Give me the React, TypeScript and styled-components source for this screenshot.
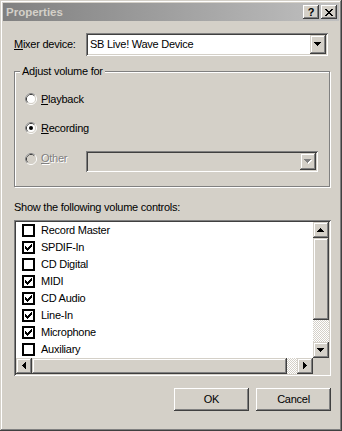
import React from "react";
import styled, { createGlobalStyle, css } from "styled-components";

const GlobalStyle = createGlobalStyle`
  html, body {
    margin: 0;
    padding: 0;
    background: #d4d0c8;
  }
  body {
    font-family: "Liberation Sans", Arial, sans-serif;
    font-size: 11px;
    line-height: 13px;
    letter-spacing: -0.25px;
    color: #000;
  }
  * {
    box-sizing: border-box;
  }
`;

// classic 3d edges
const pushBevel = css`
  background: #d4d0c8;
  box-shadow: inset -1px -1px #404040, inset 1px 1px #fff, inset -2px -2px #808080,
    inset 2px 2px #d4d0c8;
`;

const frameBevel = css`
  background: #d4d0c8;
  box-shadow: inset -1px -1px #404040, inset 1px 1px #d4d0c8, inset -2px -2px #808080,
    inset 2px 2px #fff;
`;

const sunken = css`
  box-shadow: inset 1px 1px #808080, inset -1px -1px #fff, inset 2px 2px #404040,
    inset -2px -2px #d4d0c8;
`;

const dither = css`
  background-color: #fff;
  background-image: repeating-conic-gradient(#d4d0c8 0 25%, #fff 0 50%);
  background-size: 2px 2px;
`;

const Window = styled.div`
  width: 342px;
  height: 431px;
  padding: 3px;
  display: flex;
  flex-direction: column;
  ${frameBevel};
`;

const TitleBar = styled.div`
  height: 18px;
  display: flex;
  align-items: center;
  padding: 0 2px 0 3px;
  background: linear-gradient(to right, #808080, #c0c0c0);
`;

const TitleText = styled.span`
  flex: 1;
  font-weight: bold;
  font-size: 11.5px;
  letter-spacing: 0;
  color: #d4d0c8;
`;

const CaptionButtons = styled.div`
  display: flex;
  gap: 2px;
`;

const CaptionButton = styled.div`
  width: 16px;
  height: 14px;
  display: flex;
  align-items: center;
  justify-content: center;
  font-weight: bold;
  font-size: 11px;
  line-height: 1;
  ${pushBevel};
`;

const Body = styled.div`
  display: flex;
  flex-direction: column;
  padding: 12px 8px 0 11px;
`;

const MixerRow = styled.div`
  display: flex;
  align-items: center;
`;

const FieldLabel = styled.span`
  width: 72px;
  white-space: nowrap;
`;

const ComboBox = styled.div<{ $width: number; $height: number; $disabled?: boolean }>`
  width: ${(p) => p.$width}px;
  height: ${(p) => p.$height}px;
  padding: 2px;
  display: flex;
  align-items: stretch;
  background: ${(p) => (p.$disabled ? "#d4d0c8" : "#fff")};
  ${sunken};
`;

const ComboText = styled.span`
  flex: 1;
  padding-left: 2px;
  display: flex;
  align-items: center;
  white-space: nowrap;
`;

const DropButton = styled.div`
  width: 16px;
  display: flex;
  align-items: center;
  justify-content: center;
  ${frameBevel};
`;

const GroupBox = styled.div`
  position: relative;
  margin-top: 15px;
  width: 316px;
  height: 116px;
  border: 1px solid #808080;
  box-shadow: inset 1px 1px #fff, 1px 1px #fff;
  padding: 17px 11px 0 10px;
  display: flex;
  flex-direction: column;
`;

const Legend = styled.span`
  position: absolute;
  top: -7px;
  left: 5px;
  padding: 0 2px;
  background: #d4d0c8;
  white-space: nowrap;
`;

const OptionRow = styled.div<{ $gap: number; $height: number; $top?: boolean }>`
  display: flex;
  align-items: ${(p) => (p.$top ? "flex-start" : "center")};
  margin-top: ${(p) => p.$gap}px;
  height: ${(p) => p.$height}px;
`;

const RadioOption = styled.label<{ $disabled?: boolean; $nudge?: number }>`
  display: flex;
  align-items: center;
  gap: 4px;
  margin-top: ${(p) => p.$nudge ?? 0}px;
  color: ${(p) => (p.$disabled ? "#808080" : "#000")};
  text-shadow: ${(p) => (p.$disabled ? "1px 1px #fff" : "none")};
`;

const RadioSvg = styled.svg`
  display: block;
  flex: none;
`;

const OtherCombo = styled(ComboBox)`
  margin-left: auto;
`;

const ListCaption = styled.div`
  margin-top: 14px;
`;

const ListBox = styled.div`
  margin-top: 6px;
  width: 317px;
  height: 156px;
  padding: 2px;
  background: #fff;
  display: grid;
  grid-template-columns: 1fr 16px;
  grid-template-rows: 1fr 16px;
  ${sunken};
`;

const Items = styled.div`
  display: flex;
  flex-direction: column;
  overflow: hidden;
`;

const ListItem = styled.div`
  height: 17px;
  flex: none;
  display: flex;
  align-items: center;
  gap: 6px;
  padding-left: 6px;
  white-space: nowrap;
`;

const CheckBox = styled.span`
  width: 13px;
  height: 13px;
  flex: none;
  border: 2px solid #000;
  background: #fff;
  display: flex;
  align-items: center;
  justify-content: center;
`;

const VScroll = styled.div`
  display: flex;
  flex-direction: column;
`;

const HScroll = styled.div`
  display: flex;
`;

const ScrollButton = styled.div`
  width: 16px;
  height: 16px;
  flex: none;
  display: flex;
  align-items: center;
  justify-content: center;
  ${frameBevel};
`;

const Thumb = styled.div<{ $size: number; $vertical?: boolean }>`
  flex: none;
  ${(p) => (p.$vertical ? `height: ${p.$size}px;` : `width: ${p.$size}px;`)}
  ${frameBevel};
`;

const Track = styled.div`
  flex: 1;
  ${dither};
`;

const Corner = styled.div`
  background: #d4d0c8;
`;

const ButtonRow = styled.div`
  margin-top: 12px;
  display: flex;
  justify-content: flex-end;
  gap: 7px;
`;

const PushButton = styled.button`
  width: 75px;
  height: 23px;
  border: 0;
  padding: 0;
  font: inherit;
  letter-spacing: inherit;
  color: #000;
  display: flex;
  align-items: center;
  justify-content: center;
  ${pushBevel};
`;

// pixel glyphs
const Pixels = ({ rows, color, dx = 0, dy = 0 }: { rows: string[]; color: string; dx?: number; dy?: number }) => (
  <>
    {rows.flatMap((r, j) =>
      [...r].map((c, i) =>
        c === "X" ? <rect key={`${i}-${j}`} x={i + dx} y={j + dy} width={1} height={1} fill={color} /> : null
      )
    )}
  </>
);

const ARROWS: Record<string, string[]> = {
  up: ["...X...", "..XXX..", ".XXXXX.", "XXXXXXX"],
  down: ["XXXXXXX", ".XXXXX.", "..XXX..", "...X..."],
  left: ["...X", "..XX", ".XXX", "XXXX", ".XXX", "..XX", "...X"],
  right: ["X...", "XX..", "XXX.", "XXXX", "XXX.", "XX..", "X..."],
};

const Arrow = ({ dir, disabled }: { dir: string; disabled?: boolean }) => {
  const rows = ARROWS[dir];
  const w = rows[0].length;
  const h = rows.length;
  return (
    <svg width={w + 1} height={h + 1} shapeRendering="crispEdges" style={{ display: "block" }}>
      {disabled && <Pixels rows={rows} color="#fff" dx={1} dy={1} />}
      <Pixels rows={rows} color={disabled ? "#808080" : "#000"} />
    </svg>
  );
};

const CHECK = ["......X", ".....XX", "X...XXX", "XX.XXX.", "XXXXX..", ".XXX...", "..X...."];
const CLOSE = ["XX....XX", ".XX..XX.", "..XXXX..", "...XX...", "..XXXX..", ".XX..XX.", "XX....XX"];

const Radio = ({ checked, disabled }: { checked?: boolean; disabled?: boolean }) => (
  <RadioSvg width="12" height="12" viewBox="0 0 12 12">
    <circle cx="6" cy="6" r="5.5" fill="none" stroke="#fff" />
    <path d="M2.11 9.89 A5.5 5.5 0 0 1 9.89 2.11" fill="none" stroke="#808080" />
    <circle cx="6" cy="6" r="4.5" fill="none" stroke="#d4d0c8" />
    <path d="M2.82 9.18 A4.5 4.5 0 0 1 9.18 2.82" fill="none" stroke="#404040" />
    <circle cx="6" cy="6" r="4" fill={disabled ? "#d4d0c8" : "#fff"} />
    {checked && <circle cx="6" cy="6" r="2" fill="#000" />}
  </RadioSvg>
);

const controls = [
  { name: "Record Master", on: false },
  { name: "SPDIF-In", on: true },
  { name: "CD Digital", on: false },
  { name: "MIDI", on: true },
  { name: "CD Audio", on: true },
  { name: "Line-In", on: true },
  { name: "Microphone", on: true },
  { name: "Auxiliary", on: false },
];

const App = () => {
  return (
    <>
      <GlobalStyle />
      <Window>
        <TitleBar>
          <TitleText>Properties</TitleText>
          <CaptionButtons>
            <CaptionButton>?</CaptionButton>
            <CaptionButton>
              <svg width="8" height="7" shapeRendering="crispEdges" style={{ display: "block" }}>
                <Pixels rows={CLOSE} color="#000" />
              </svg>
            </CaptionButton>
          </CaptionButtons>
        </TitleBar>
        <Body>
          <MixerRow>
            <FieldLabel>
              <u>M</u>ixer device:
            </FieldLabel>
            <ComboBox $width={242} $height={23}>
              <ComboText>SB Live! Wave Device</ComboText>
              <DropButton>
                <Arrow dir="down" />
              </DropButton>
            </ComboBox>
          </MixerRow>

          <GroupBox>
            <Legend>Adjust volume for</Legend>
            <OptionRow $gap={0} $height={20}>
              <RadioOption>
                <Radio />
                <span>
                  <u>P</u>layback
                </span>
              </RadioOption>
            </OptionRow>
            <OptionRow $gap={9} $height={20}>
              <RadioOption>
                <Radio checked />
                <span>
                  <u>R</u>ecording
                </span>
              </RadioOption>
            </OptionRow>
            <OptionRow $gap={13} $height={21} $top>
              <RadioOption $disabled $nudge={1}>
                <Radio disabled />
                <span>
                  <u>O</u>ther
                </span>
              </RadioOption>
              <OtherCombo $width={232} $height={21} $disabled>
                <ComboText />
                <DropButton>
                  <Arrow dir="down" disabled />
                </DropButton>
              </OtherCombo>
            </OptionRow>
          </GroupBox>

          <ListCaption>Show the following volume controls:</ListCaption>
          <ListBox>
            <Items>
              {controls.map((c) => (
                <ListItem key={c.name}>
                  <CheckBox>
                    {c.on && (
                      <svg width="7" height="7" shapeRendering="crispEdges" style={{ display: "block" }}>
                        <Pixels rows={CHECK} color="#000" />
                      </svg>
                    )}
                  </CheckBox>
                  <span>{c.name}</span>
                </ListItem>
              ))}
            </Items>
            <VScroll>
              <ScrollButton>
                <Arrow dir="up" />
              </ScrollButton>
              <Thumb $size={82} $vertical />
              <Track />
              <ScrollButton>
                <Arrow dir="down" />
              </ScrollButton>
            </VScroll>
            <HScroll>
              <ScrollButton>
                <Arrow dir="left" />
              </ScrollButton>
              <Thumb $size={255} />
              <Track />
              <ScrollButton>
                <Arrow dir="right" />
              </ScrollButton>
            </HScroll>
            <Corner />
          </ListBox>

          <ButtonRow>
            <PushButton>OK</PushButton>
            <PushButton>Cancel</PushButton>
          </ButtonRow>
        </Body>
      </Window>
    </>
  );
};

export default App;
